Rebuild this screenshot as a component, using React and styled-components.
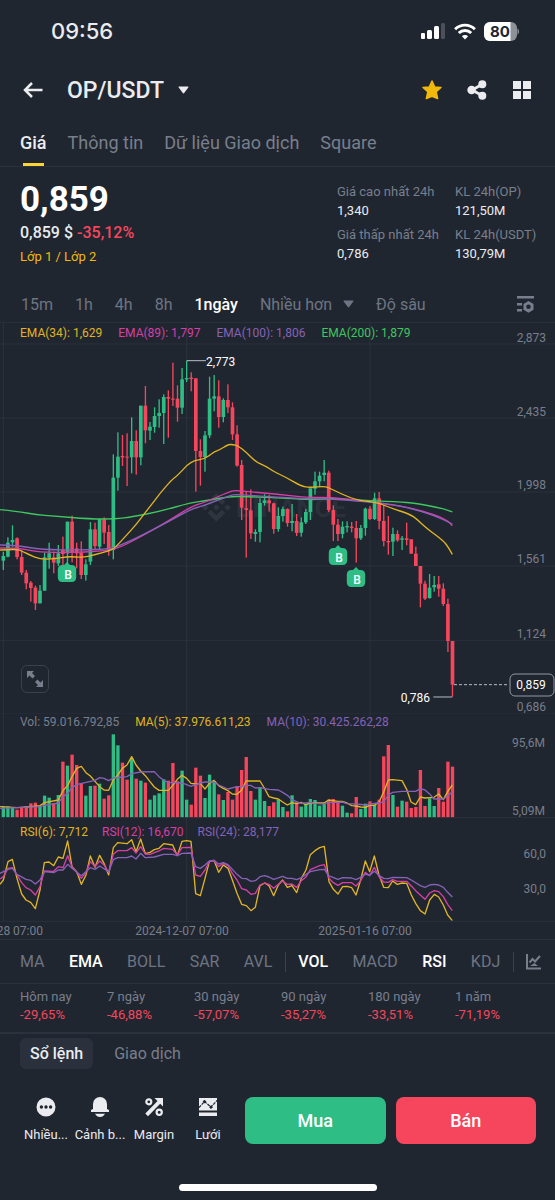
import React, { useState } from "react";
import styled, { createGlobalStyle, css } from "styled-components";

const c = {
    bg: "#202630",
    line: "#2b323d",
    text: "#eaecef",
    muted: "#787f8c",
    dim: "#6d7583",
    green: "#2ebd85",
    red: "#f6465d",
    yellow: "#f0b90b",
    gold: "#e0b422",
    pink: "#d63fa6",
    purple: "#8662b8",
    lime: "#3fc65f",
};

// [up, bodyTop, bodyBottom, wickTop, wickBottom, volume height], 3 units per px
const CANDLES = [
    [1, 708, 722, 695, 750, 34], [1, 668, 710, 652, 712, 34], [1, 660, 667, 616, 680, 31], [0, 655, 711, 652, 718, 24],
    [0, 711, 758, 690, 765, 30], [0, 758, 790, 750, 808, 34], [0, 788, 804, 783, 845, 43], [0, 803, 850, 797, 870, 45],
    [1, 812, 850, 795, 850, 34], [1, 712, 812, 698, 812, 66], [1, 700, 716, 668, 746, 60], [0, 712, 728, 695, 760, 44],
    [1, 700, 730, 675, 738, 68], [0, 690, 702, 650, 735, 168], [1, 605, 700, 605, 730, 156], [0, 605, 697, 587, 727, 189],
    [0, 685, 700, 668, 745, 158], [0, 698, 765, 664, 777, 104], [1, 733, 765, 718, 782, 66], [1, 628, 725, 606, 735, 95],
    [0, 628, 678, 608, 690, 96], [1, 598, 680, 596, 690, 102], [0, 598, 638, 592, 672, 57], [0, 636, 690, 615, 707, 67],
    [1, 473, 690, 403, 718, 250], [1, 410, 473, 337, 512, 217], [0, 408, 412, 345, 438, 165], [0, 410, 413, 340, 498, 114],
    [1, 363, 412, 292, 460, 179], [0, 363, 412, 331, 464, 117], [1, 257, 412, 257, 436, 111], [0, 257, 331, 198, 370, 105],
    [1, 320, 332, 306, 360, 54], [1, 288, 321, 262, 338, 67], [1, 279, 288, 238, 323, 73], [1, 231, 279, 223, 372, 115],
    [0, 231, 236, 211, 353, 111], [0, 236, 239, 128, 258, 164], [0, 236, 263, 196, 305, 109], [1, 178, 263, 144, 282, 141],
    [1, 174, 178, 122, 186, 54], [0, 173, 177, 157, 214, 39], [0, 175, 393, 175, 515, 150], [0, 393, 411, 358, 497, 126],
    [1, 346, 411, 333, 455, 59], [1, 236, 346, 170, 354, 129], [1, 229, 236, 165, 274, 110], [0, 229, 291, 181, 323, 70],
    [1, 240, 291, 235, 307, 53], [0, 240, 262, 193, 279, 77], [0, 262, 343, 247, 360, 54], [0, 343, 437, 316, 440, 95],
    [0, 435, 563, 420, 600, 143], [0, 565, 570, 515, 713, 182], [0, 571, 640, 508, 657, 80], [1, 636, 642, 628, 665, 54],
    [1, 549, 636, 535, 667, 92], [1, 541, 549, 523, 557, 50], [0, 541, 550, 525, 575, 35], [0, 550, 627, 548, 641, 46],
    [1, 588, 627, 562, 635, 54], [1, 567, 588, 560, 605, 32], [0, 567, 609, 565, 620, 19], [1, 603, 609, 552, 634, 67],
    [0, 603, 639, 582, 648, 46], [1, 607, 638, 592, 650, 33], [1, 576, 607, 567, 612, 42], [1, 505, 576, 505, 600, 56],
    [1, 484, 506, 455, 524, 53], [1, 467, 484, 455, 500, 36], [1, 458, 465, 420, 484, 43], [0, 458, 570, 452, 576, 54],
    [0, 570, 614, 556, 663, 56], [0, 614, 642, 597, 663, 47], [1, 620, 642, 604, 655, 36], [1, 618, 622, 604, 637, 15],
    [0, 620, 624, 606, 637, 13], [0, 624, 655, 603, 728, 62], [1, 624, 655, 615, 660, 26], [1, 566, 624, 563, 647, 42],
    [0, 566, 597, 558, 600, 49], [1, 535, 597, 518, 600, 39], [0, 535, 603, 516, 628, 54], [0, 603, 663, 555, 679, 184],
    [0, 663, 667, 588, 704, 218], [1, 642, 665, 623, 708, 68], [0, 642, 661, 631, 665, 33], [1, 655, 659, 648, 690, 51],
    [0, 655, 660, 608, 676, 48], [0, 658, 701, 658, 701, 29], [0, 701, 738, 680, 738, 32], [0, 738, 791, 738, 862, 143],
    [0, 791, 836, 782, 840, 35], [1, 803, 834, 762, 836, 58], [1, 795, 802, 768, 815, 35], [0, 793, 806, 768, 830, 89],
    [0, 806, 852, 790, 858, 48], [0, 852, 963, 836, 996, 168], [0, 963, 1094, 963, 1130, 153],
];

const EMA_LINES = [
    [c.lime, "0,569 50,574 110,584 160,588 270,597 345,597 400,590 480,574 573,548 620,542 690,529 740,530 800,532 860,535 940,540 990,535 1065,540 1190,545 1250,550 1330,566 1357,576"],
    [c.pink, "0,684 50,684 90,691 130,697 260,697 330,690 360,682 400,662 440,640 500,606 573,560 620,545 690,514 710,511 750,516 830,522 925,533 990,532 1065,540 1130,548 1230,563 1300,583 1340,600 1357,617"],
    [c.purple, "0,675 50,676 125,689 250,690 330,687 380,668 430,644 500,608 573,567 610,558 690,526 710,523 790,529 930,537 990,536 1065,543 1170,551 1235,566 1300,585 1357,612"],
    [c.gold, "0,690 50,687 65,693 85,703 120,718 165,717 205,709 250,713 285,704 330,692 345,683 380,645 408,614 430,585 460,547 480,520 515,480 532,467 573,423 612,418 642,396 656,391 684,374 697,373 715,378 738,396 766,425 800,440 820,454 860,473 903,498 930,503 975,498 1000,510 1065,540 1130,547 1170,563 1230,583 1250,597 1280,625 1330,662 1345,682 1357,703"],
];

const VOL_LINES = [
    [c.gold, "0,278 51,281 92,278 120,275 134,266 175,258 189,230 203,214 216,188 230,163 244,157 258,176 271,186 285,202 299,218 312,228 326,229 340,198 353,183 367,163 381,153 395,128 408,153 422,171 436,185 450,203 463,219 477,229 505,229 518,215 532,196 546,184 560,193 573,208 587,210 601,208 615,225 628,208 642,199 656,215 670,223 684,230 697,240 711,241 725,228 738,201 780,201 793,222 807,248 821,252 835,255 848,264 862,273 876,266 890,269 903,265 917,272 931,267 972,267 986,258 1013,262 1027,262 1041,267 1055,275 1068,276 1082,279 1096,280 1110,274 1124,274 1137,264 1151,234 1165,198 1178,197 1206,200 1220,226 1233,264 1247,272 1261,249 1275,252 1302,250 1316,240 1330,257 1343,233 1357,213"],
    [c.purple, "0,283 120,278 134,274 175,267 189,248 203,238 216,221 230,212 258,205 285,199 299,191 312,193 326,200 340,192 381,188 395,179 422,174 463,173 477,188 491,199 505,205 546,207 573,217 601,207 615,204 642,204 656,213 684,225 711,218 725,218 738,214 752,214 766,222 780,221 807,226 835,228 848,235 862,244 876,257 890,263 903,268 931,265 945,268 972,270 986,264 1000,266 1027,264 1041,269 1068,270 1096,273 1151,264 1165,243 1178,235 1206,232 1247,232 1261,224 1275,228 1288,239 1302,255 1330,255 1343,246 1357,233"],
];

const RSI_LINES = [
    [c.gold, "0,208 10,195 24,140 37,133 51,190 65,237 78,255 92,262 106,281 120,225 133,143 147,141 161,152 175,126 189,130 203,78 216,155 230,170 244,208 258,180 271,123 285,157 299,121 312,145 326,180 340,98 353,83 381,86 395,74 408,110 422,72 436,116 450,112 463,104 477,100 491,86 518,90 532,122 546,79 560,77 573,79 587,236 601,242 615,190 628,140 642,136 656,172 670,150 684,160 697,195 711,235 725,268 739,272 753,287 766,277 780,212 794,204 807,212 821,242 835,210 848,195 862,217 876,212 890,233 904,190 918,165 931,119 945,107 959,98 973,94 987,200 1000,223 1014,237 1028,215 1042,214 1055,218 1068,240 1082,195 1096,138 1109,170 1123,123 1137,180 1151,217 1165,218 1178,198 1192,208 1206,204 1220,205 1234,240 1247,265 1261,287 1275,297 1289,255 1303,238 1316,246 1330,270 1343,300 1357,317"],
    [c.pink, "0,192 10,185 24,160 37,158 51,180 65,203 78,218 92,225 106,240 120,215 133,168 161,169 175,155 189,158 203,122 216,155 230,172 244,190 258,172 271,140 285,155 299,138 312,150 326,172 340,118 353,107 381,107 395,98 408,114 422,95 436,117 450,118 477,108 491,100 518,103 532,120 546,98 573,97 587,180 601,184 615,165 628,140 642,137 656,155 670,145 684,152 697,175 711,195 725,221 739,225 753,238 766,235 780,210 794,204 807,208 821,220 835,208 848,198 862,208 876,207 890,217 904,197 918,186 931,164 959,152 973,149 987,190 1000,203 1014,211 1028,203 1055,203 1068,213 1082,197 1096,172 1109,182 1123,157 1137,185 1151,201 1165,202 1178,194 1192,199 1220,199 1234,213 1247,227 1261,240 1275,253 1289,234 1303,227 1316,230 1330,245 1343,268 1357,287"],
    [c.purple, "0,175 24,163 37,160 51,178 78,193 92,196 106,207 120,195 133,170 161,173 175,165 189,165 203,148 216,160 244,182 271,158 285,163 299,153 326,170 340,134 353,128 381,128 395,123 408,132 422,115 436,128 463,126 491,118 518,118 532,122 546,115 573,114 587,155 601,160 615,150 628,138 642,136 656,147 670,143 684,149 697,163 711,178 725,190 739,191 753,199 766,197 780,185 794,182 807,186 821,193 848,184 862,190 876,190 890,194 904,188 931,170 959,164 973,163 987,183 1014,193 1028,188 1055,189 1068,194 1082,187 1096,177 1109,181 1123,169 1137,181 1151,190 1165,191 1178,187 1220,188 1234,195 1261,212 1275,217 1289,210 1303,208 1316,210 1330,217 1343,232 1357,246"],
];

const candleX = (i) => 10 + i * 13.75;

// rounds the corners of a polyline through the midpoints of its segments
const smooth = (points) => {
    const pts = points.split(" ").map((p) => p.split(",").map(Number));
    let d = `M${pts[0]}`;
    for (let i = 1; i < pts.length - 1; i++) {
        const [x, y] = pts[i];
        const [nx, ny] = pts[i + 1];
        d += `Q${x} ${y} ${(x + nx) / 2} ${(y + ny) / 2}`;
    }
    return `${d}L${pts[pts.length - 1]}`;
};

const GlobalStyle = createGlobalStyle`
    * { box-sizing: border-box; }
    body {
        margin: 0;
        background-color: ${c.bg};
        color: ${c.text};
        font-family: Roboto, "Noto Sans", sans-serif;
    }
    button {
        background: none;
        border: none;
        padding: 0;
        margin: 0;
        color: inherit;
        font: inherit;
        cursor: pointer;
    }
    svg { display: block; flex: none; }
`;

const Page = styled.div`
    min-height: 100vh;
    display: flex;
    flex-direction: column;
`;

const StatusBar = styled.div`
    display: flex;
    align-items: center;
    justify-content: space-between;
    height: 62px;
    padding: 0 36px 0 51px;
`;

const Clock = styled.span`
    font-family: Inter, sans-serif;
    font-size: 22px;
    font-weight: 500;
`;

const StatusIcons = styled.div`
    display: flex;
    align-items: center;
    gap: 8px;
`;

const Header = styled.header`
    display: flex;
    align-items: center;
    height: 56px;
    padding: 0 23px;
`;

const PairButton = styled.button`
    display: flex;
    align-items: center;
    gap: 14px;
    margin-left: 24px;
    font-size: 23px;
    font-weight: 500;
`;

const HeaderActions = styled.div`
    display: flex;
    align-items: center;
    gap: 25px;
    margin-left: auto;
`;

const Tabs = styled.nav`
    display: flex;
    gap: 21px;
    height: 49px;
    padding: 0 20px;
    border-bottom: 1px solid ${c.line};
`;

const Tab = styled.button`
    position: relative;
    font-size: 18px;
    color: ${(p) => (p.$active ? c.text : c.muted)};
    font-weight: ${(p) => (p.$active ? 500 : 400)};
    ${(p) => p.$active && css`
        &::after {
            content: "";
            position: absolute;
            bottom: 0;
            left: 3px;
            right: 3px;
            height: 3px;
            background-color: #fcd535;
        }
    `}
`;

const Quote = styled.section`
    display: flex;
    justify-content: space-between;
    height: 119px;
    padding: 12px 20px 0;
`;

const Price = styled.div`
    font-size: 35px;
    line-height: 42px;
    font-weight: 700;
    color: #fff;
`;

const PriceChange = styled.div`
    font-size: 16px;
    line-height: 24px;
    font-weight: 500;
    span { color: ${c.red}; }
`;

const Layers = styled.a`
    font-size: 13px;
    line-height: 24px;
    color: ${c.yellow};
    text-decoration: none;
`;

const Stats = styled.dl`
    display: grid;
    grid-template-columns: 118px 80px;
    align-content: start;
    row-gap: 5px;
    margin: 3px 0 0;
    font-size: 13px;
    line-height: 19px;
    white-space: nowrap;
    dt { color: ${c.muted}; }
    dd { margin: 0; }
`;

const Intervals = styled.div`
    display: flex;
    align-items: center;
    gap: 22px;
    height: 36px;
    padding: 0 21px;
`;

const TextButton = styled.button`
    display: flex;
    align-items: center;
    gap: 11px;
    white-space: nowrap;
    font-size: 16px;
    color: ${(p) => (p.$active ? "#fff" : c.dim)};
    font-weight: ${(p) => (p.$active ? 500 : 400)};
`;

const SettingsButton = styled.button`
    margin-left: auto;
`;

const Pane = styled.section`
    position: relative;
    svg.plot { width: 100%; height: auto; }
`;

const Legend = styled.div`
    position: absolute;
    top: ${(p) => p.$top}px;
    left: 20px;
    display: flex;
    gap: ${(p) => p.$gap || 16}px;
    font-size: 12px;
    line-height: 14px;
    white-space: nowrap;
`;

const LegendItem = styled.span`
    color: ${(p) => p.$color};
`;

const ExpandButton = styled.button`
    position: absolute;
    left: 21px;
    bottom: 21px;
    width: 28px;
    height: 28px;
    border: 1px solid #39414d;
    border-radius: 6px;
    display: flex;
    align-items: center;
    justify-content: center;
`;

const AxisText = styled.text`
    font-size: 12px;
    fill: ${(p) => p.$fill || c.muted};
    text-anchor: ${(p) => p.$anchor || "end"};
`;

const MarkerText = styled.text`
    font-size: 12px;
    font-weight: 500;
    fill: #fff;
    text-anchor: middle;
`;

const Watermark = styled.text`
    font-size: 26px;
    font-weight: 700;
    fill: #2b313b;
`;

const Indicators = styled.div`
    display: flex;
    align-items: center;
    justify-content: space-between;
    height: 45px;
    padding: 0 14px 0 20px;
    border-top: 1px solid ${c.line};
    border-bottom: 1px solid ${c.line};
`;

const Divider = styled.span`
    width: 1px;
    height: 20px;
    margin: 0 -12px;
    background-color: #39414d;
`;

const Performance = styled.dl`
    display: grid;
    grid-template-columns: repeat(6, 1fr);
    margin: 0;
    height: 50px;
    padding: 4px 13px 0 20px;
    border-bottom: 2px solid ${c.line};
    font-size: 13px;
    line-height: 18px;
    white-space: nowrap;
    dt { color: ${c.muted}; }
    dd { margin: 0; color: ${c.red}; }
`;

const BookTabs = styled.div`
    display: flex;
    gap: 11px;
    padding: 4px 20px 0;
`;

const BookTab = styled.button`
    height: 31px;
    padding: 0 10px;
    border-radius: 6px;
    font-size: 16px;
    font-weight: ${(p) => (p.$active ? 500 : 400)};
    color: ${(p) => (p.$active ? c.text : c.muted)};
    background-color: ${(p) => (p.$active ? "#2b313c" : "transparent")};
`;

const BottomBar = styled.footer`
    display: flex;
    align-items: center;
    gap: 10px;
    margin-top: 28px;
    padding: 0 19px 0 19px;
`;

const Shortcuts = styled.div`
    flex: none;
    display: grid;
    grid-template-columns: repeat(4, 54px);
`;

const Shortcut = styled.button`
    display: flex;
    flex-direction: column;
    align-items: center;
    gap: 9px;
    font-size: 13px;
    line-height: 18px;
    white-space: nowrap;
`;

const TradeButton = styled.button`
    flex: 1;
    height: 47px;
    border-radius: 8px;
    font-size: 18px;
    font-weight: 500;
    color: #fff;
    background-color: ${(p) => p.$color};
`;

const HomeIndicator = styled.div`
    align-self: center;
    width: 198px;
    height: 7px;
    margin: 40px 0 10px;
    border-radius: 4px;
    background-color: #fff;
`;

const Caret = ({ color }) => (
    <svg width="11" height="8" viewBox="0 0 11 8">
        <path d="M1.2 .5h8.6c.6 0 .9.7.5 1.1L6.2 7c-.4.5-1 .5-1.4 0L.7 1.6C.3 1.200.6.5 1.200.5z" fill={color} />
    </svg>
);

const StatusSvg = () => (
    <StatusIcons>
        <svg width="26" height="18" viewBox="0 0 26 18" fill="#fff">
            <rect x="1" y="11" width="4" height="6" rx="1" />
            <rect x="7" y="8" width="5" height="9" rx="1.5" />
            <rect x="14" y="4" width="5" height="13" rx="1.5" />
            <rect x="21" y="1" width="4" height="16" rx="1.5" opacity=".2" />
        </svg>
        <svg width="22" height="17" viewBox="0 0 22 17" fill="none" stroke="#fff" strokeWidth="2.9">
            <path d="M1.1 6.2a14 14 0 0 1 19.8 0" />
            <path d="M4.8 10a8.800 8.800 0 0 1 12.400 0" />
            <path d="M11 16.5l-3.100-3.200a4.400 4.400 0 0 1 6.200 0z" fill="#fff" stroke="none" />
        </svg>
        <svg width="35" height="19" viewBox="0 0 35 19">
            <rect x="0" y="0" width="33" height="19" rx="6" fill="#8d9198" />
            <path d="M6 0h20.500v19H6a6 6 0 0 1-6-6V6a6 6 0 0 1 6-6z" fill="#fff" />
            <path d="M33.500 6.500c2 .8 2 5.200 0 6z" fill="#8d9198" />
            <text x="16" y="15" textAnchor="middle" fontFamily="Inter" fontSize="15" fontWeight="700" fill={c.bg}>80</text>
        </svg>
    </StatusIcons>
);

const Lines = ({ data, curved }) => data.map(([color, points]) => (
    curved
        ? <path key={color} d={smooth(points)} fill="none" stroke={color} strokeWidth="4" />
        : <polyline key={color} points={points} fill="none" stroke={color} strokeWidth="4" strokeLinejoin="round" />
));

const VerticalGrid = ({ height }) => [10, 560, 1110].map((x) => (
    <path key={x} d={`M${x} 0V${height}`} stroke={c.line} strokeWidth="3" />
));

const BuyMarker = ({ x, y }) => (
    <g>
        <path d={`M${x} ${y}l3 3h1.500q4.700 0 4.700 4.700v7.600q0 4.700-4.700 4.700h-9q-4.700 0-4.700-4.700v-7.600q0-4.700 4.700-4.700h1.500z`} fill={c.green} />
        <MarkerText x={x + 1} y={y + 17}>B</MarkerText>
    </g>
);

const PricePane = () => (
    <Pane>
        <svg className="plot" viewBox="0 0 555 392" width="555" height="392">
            <g transform="translate(0 -2) scale(.33333)">
                <VerticalGrid height={1184} />
                {[7, 72, 294, 516, 738, 961, 1182].map((y) => (
                    <path key={y} d={`M0 ${y}H1665`} stroke={c.line} strokeWidth="3" />
                ))}
            </g>
            <g transform="translate(202 171) scale(1.2)" fill="#2f353f">
                <path d="M16.624 13.920l2.718 2.716-7.353 7.353-7.353-7.352 2.717-2.717 4.636 4.660 4.635-4.660zM21.261 9.284L24 12l-2.715 2.716L18.568 12zM11.989 9.284l2.716 2.692-2.717 2.717L9.272 12zM2.716 9.284L5.410 12l-2.692 2.692L0 12zM11.990.010l7.352 7.330-2.717 2.715-4.636-4.636-4.635 4.660-2.717-2.716z" />
            </g>
            <Watermark x="236" y="195">BINANCE</Watermark>
            <g transform="translate(0 -2) scale(.33333)">
                {CANDLES.map(([up, top, bottom, high, low], i) => (
                    <g key={i} fill={up ? c.green : c.red}>
                        <rect x={candleX(i) - 2} y={high} width="4" height={low - high} />
                        <rect x={candleX(i) - 5.5} y={top} width="11" height={bottom - top} />
                    </g>
                ))}
                <Lines data={EMA_LINES} curved />
                <path d="M560 122h58M1300 1131h57" stroke="#b7bdc6" strokeWidth="3" />
                <path d="M1362 1094h164" stroke="#b7bdc6" strokeWidth="3" strokeDasharray="9 6" />
            </g>
            <BuyMarker x={67} y={240} />
            <BuyMarker x={338} y={223} />
            <BuyMarker x={356} y={245} />
            <AxisText x="206" y="44" $anchor="start" $fill="#fff">2,773</AxisText>
            <AxisText x="430" y="380" $fill="#fff">0,786</AxisText>
            {[["2,873", 20], ["2,435", 94], ["1,998", 167], ["1,561", 241], ["1,124", 316], ["0,686", 389]].map(([label, y]) => (
                <AxisText key={label} x="546" y={y}>{label}</AxisText>
            ))}
            <rect x="510" y="352" width="44" height="22" rx="5" fill={c.bg} stroke="#9299a4" />
            <AxisText x="531" y="367" $anchor="middle" $fill="#fff">0,859</AxisText>
        </svg>
        <Legend $top={4}>
            <LegendItem $color={c.gold}>EMA(34): 1,629</LegendItem>
            <LegendItem $color={c.pink}>EMA(89): 1,797</LegendItem>
            <LegendItem $color={c.purple}>EMA(100): 1,806</LegendItem>
            <LegendItem $color={c.lime}>EMA(200): 1,879</LegendItem>
        </Legend>
        <ExpandButton aria-label="Toàn màn hình">
            <svg width="18" height="18" viewBox="0 0 18 18" fill="#787f8c">
                <path d="M1 1h7L6 3l3 3-2.500 2.500-3-3L1 8zM17 17h-7l2-2-3-3 2.500-2.500 3 3L17 10z" />
            </svg>
        </ExpandButton>
    </Pane>
);

const VolumePane = () => (
    <Pane>
        <svg className="plot" viewBox="0 0 555 104" width="555" height="104">
            <g transform="scale(.33333)">
                <VerticalGrid height={312} />
                {CANDLES.map((d, i) => (
                    <rect key={i} x={candleX(i) - 5} y={311 - d[5]} width="10" height={d[5]} fill={d[0] ? c.green : c.red} />
                ))}
                <Lines data={VOL_LINES} />
                <path d="M0 311H1665" stroke={c.line} strokeWidth="3" />
            </g>
            <AxisText x="545" y="33">95,6M</AxisText>
            <AxisText x="545" y="101">5,09M</AxisText>
        </svg>
        <Legend $top={1}>
            <LegendItem $color={c.muted}>Vol: 59.016.792,85</LegendItem>
            <LegendItem $color={c.gold}>MA(5): 37.976.611,23</LegendItem>
            <LegendItem $color={c.purple}>MA(10): 30.425.262,28</LegendItem>
        </Legend>
    </Pane>
);

const RsiPane = () => (
    <Pane>
        <svg className="plot" viewBox="0 0 555 121" width="555" height="121">
            <g transform="translate(0 -3) scale(.33333)">
                <VerticalGrid height={319} />
                <Lines data={RSI_LINES} />
                <path d="M0 319H1665" stroke={c.line} strokeWidth="3" />
            </g>
            <AxisText x="546" y="40">60,0</AxisText>
            <AxisText x="546" y="75">30,0</AxisText>
            <AxisText x="43" y="117">28 07:00</AxisText>
            <AxisText x="182" y="117" $anchor="middle">2024-12-07 07:00</AxisText>
            <AxisText x="365" y="117" $anchor="middle">2025-01-16 07:00</AxisText>
        </svg>
        <Legend $top={7} $gap={14}>
            <LegendItem $color={c.gold}>RSI(6): 7,712</LegendItem>
            <LegendItem $color={c.pink}>RSI(12): 16,670</LegendItem>
            <LegendItem $color={c.purple}>RSI(24): 28,177</LegendItem>
        </Legend>
    </Pane>
);

const PERFORMANCE = [
    ["Hôm nay", "-29,65%"], ["7 ngày", "-46,88%"], ["30 ngày", "-57,07%"],
    ["90 ngày", "-35,27%"], ["180 ngày", "-33,51%"], ["1 năm", "-71,19%"],
];

const SHORTCUTS = [
    ["Nhiều...", (
        <path fillRule="evenodd" d="M10 .5a9.500 9.500 0 1 0 0 19 9.500 9.500 0 0 0 0-19zM5.400 8.300a1.700 1.700 0 1 1 0 3.400 1.700 1.700 0 0 1 0-3.400zm4.600 0a1.700 1.700 0 1 1 0 3.400 1.700 1.700 0 0 1 0-3.400zm4.600 0a1.700 1.700 0 1 1 0 3.400 1.700 1.700 0 0 1 0-3.400z" />
    )],
    ["Cảnh b...", (
        <path d="M10 0a7 7 0 0 0-7 7v5L1 13v2h18v-2l-2-1V7a7 7 0 0 0-7-7zM5 16.700h10c-1 2-3 3.300-5 3.300s-4-1.300-5-3.300z" />
    )],
    ["Margin", (
        <>
            <path d="M10.500 1H19v8.500l-2.800-2.800L4 19.200 1.300 16.500 13.500 4z" />
            <circle cx="4.800" cy="4.800" r="4.800" fill={c.bg} />
            <circle cx="15.200" cy="15.200" r="5" fill={c.bg} />
            <circle cx="4.800" cy="4.800" r="2.500" fill="none" stroke={c.text} strokeWidth="2.200" />
            <circle cx="15.200" cy="15.200" r="2.600" fill="none" stroke={c.text} strokeWidth="2.200" />
        </>
    )],
    ["Lưới", (
        <>
            <path d="M1 1h18v12.500H1zM1 15.500h18V19H1z" />
            <path d="M1 10.500L6.500 4.500l6.500 5.500L19 3.500" fill="none" stroke={c.bg} strokeWidth="1.200" strokeDasharray="3 1" />
            <path d="M6.500 2.700l1.900 1.900-1.900 1.900-1.900-1.900zM13 8.300l1.900 1.900-1.900 1.900-1.900-1.900z" fill={c.bg} />
        </>
    )],
];

function App() {
    const [tab, setTab] = useState("Giá");
    const [frame, setFrame] = useState("1ngày");
    const [book, setBook] = useState("Sổ lệnh");
    const [active, setActive] = useState(["EMA", "VOL", "RSI"]);

    const toggle = (name) => {
        setActive(active.includes(name) ? active.filter((n) => n !== name) : [...active, name]);
    };

    const indicator = (name) => (
        <TextButton key={name} $active={active.includes(name)} onClick={() => toggle(name)}>{name}</TextButton>
    );

    return (
        <Page>
            <GlobalStyle />
            <StatusBar>
                <Clock>09:56</Clock>
                <StatusSvg />
            </StatusBar>

            <Header>
                <button aria-label="Quay lại">
                    <svg width="20" height="16" viewBox="0 0 20 16" fill="none" stroke={c.text} strokeWidth="2.5">
                        <path d="M19.5 8H2M9 1L2 8l7 7" />
                    </svg>
                </button>
                <PairButton>OP/USDT <Caret color={c.text} /></PairButton>
                <HeaderActions>
                    <button aria-label="Yêu thích">
                        <svg width="20" height="20" viewBox="0 0 20 20" fill={c.yellow} stroke={c.yellow} strokeWidth="1.5" strokeLinejoin="round">
                            <path d="M10 1l2.600 5.900 6.400.6-4.800 4.300 1.400 6.700L10 16.300l-5.600 2.200 1.400-6.700L1 7.500l6.400-.6z" />
                        </svg>
                    </button>
                    <button aria-label="Chia sẻ">
                        <svg width="20" height="20" viewBox="0 0 20 20" fill={c.text}>
                            <path d="M15 4.500L5 10l10 5.500" fill="none" stroke={c.text} strokeWidth="2.800" />
                            <circle cx="15.300" cy="4.200" r="4" />
                            <circle cx="4.600" cy="10" r="4.300" />
                            <circle cx="15.300" cy="15.800" r="4" />
                        </svg>
                    </button>
                    <button aria-label="Bố cục">
                        <svg width="20" height="20" viewBox="0 0 20 20" fill={c.text}>
                            <path d="M1 1h8v8H1zM11 1h8v8h-8zM1 11h8v8H1zM11 11h8v8h-8z" />
                        </svg>
                    </button>
                </HeaderActions>
            </Header>

            <Tabs>
                {["Giá", "Thông tin", "Dữ liệu Giao dịch", "Square"].map((name) => (
                    <Tab key={name} $active={tab === name} onClick={() => setTab(name)}>{name}</Tab>
                ))}
            </Tabs>

            <Quote>
                <div>
                    <Price>0,859</Price>
                    <PriceChange>0,859 $ <span>-35,12%</span></PriceChange>
                    <Layers href="#layers">Lớp 1 / Lớp 2</Layers>
                </div>
                <Stats>
                    <div><dt>Giá cao nhất 24h</dt><dd>1,340</dd></div>
                    <div><dt>KL 24h(OP)</dt><dd>121,50M</dd></div>
                    <div><dt>Giá thấp nhất 24h</dt><dd>0,786</dd></div>
                    <div><dt>KL 24h(USDT)</dt><dd>130,79M</dd></div>
                </Stats>
            </Quote>

            <Intervals>
                {["15m", "1h", "4h", "8h", "1ngày"].map((name) => (
                    <TextButton key={name} $active={frame === name} onClick={() => setFrame(name)}>{name}</TextButton>
                ))}
                <TextButton>Nhiều hơn <Caret color={c.dim} /></TextButton>
                <TextButton>Độ sâu</TextButton>
                <SettingsButton aria-label="Cài đặt biểu đồ">
                    <svg width="17" height="17" viewBox="0 0 17 17" fill={c.muted}>
                        <path d="M0 0h17v2.500H0zM0 7h5v2.400H0zM0 13h5v2.400H0z" />
                        <path fillRule="evenodd" d="M11.500 5l5 2.900v5.900l-5 2.900-5-2.900V7.900zM11.500 8.500a2.300 2.300 0 1 0 0 4.600 2.300 2.300 0 0 0 0-4.600z" />
                    </svg>
                </SettingsButton>
            </Intervals>

            <PricePane />
            <VolumePane />
            <RsiPane />

            <Indicators>
                {["MA", "EMA", "BOLL", "SAR", "AVL"].map(indicator)}
                <Divider />
                {["VOL", "MACD", "RSI", "KDJ"].map(indicator)}
                <Divider />
                <button aria-label="Chỉ báo">
                    <svg width="15" height="16" viewBox="0 0 15 16" fill="none" stroke={c.muted} strokeWidth="2">
                        <path d="M1 0v14.500h14" />
                        <path d="M3.500 8.500L6.500 5l2.500 2.500L14 2" />
                        <path d="M4 12l4.500-3L12 12z" fill={c.muted} stroke="none" />
                    </svg>
                </button>
            </Indicators>

            <Performance>
                {PERFORMANCE.map(([label, value]) => (
                    <div key={label}><dt>{label}</dt><dd>{value}</dd></div>
                ))}
            </Performance>

            <BookTabs>
                {["Sổ lệnh", "Giao dịch"].map((name) => (
                    <BookTab key={name} $active={book === name} onClick={() => setBook(name)}>{name}</BookTab>
                ))}
            </BookTabs>

            <BottomBar>
                <Shortcuts>
                    {SHORTCUTS.map(([label, icon]) => (
                        <Shortcut key={label}>
                            <svg width="20" height="20" viewBox="0 0 20 20" fill={c.text}>{icon}</svg>
                            {label}
                        </Shortcut>
                    ))}
                </Shortcuts>
                <TradeButton $color={c.green}>Mua</TradeButton>
                <TradeButton $color={c.red}>Bán</TradeButton>
            </BottomBar>
            <HomeIndicator />
        </Page>
    );
}

export default App;
